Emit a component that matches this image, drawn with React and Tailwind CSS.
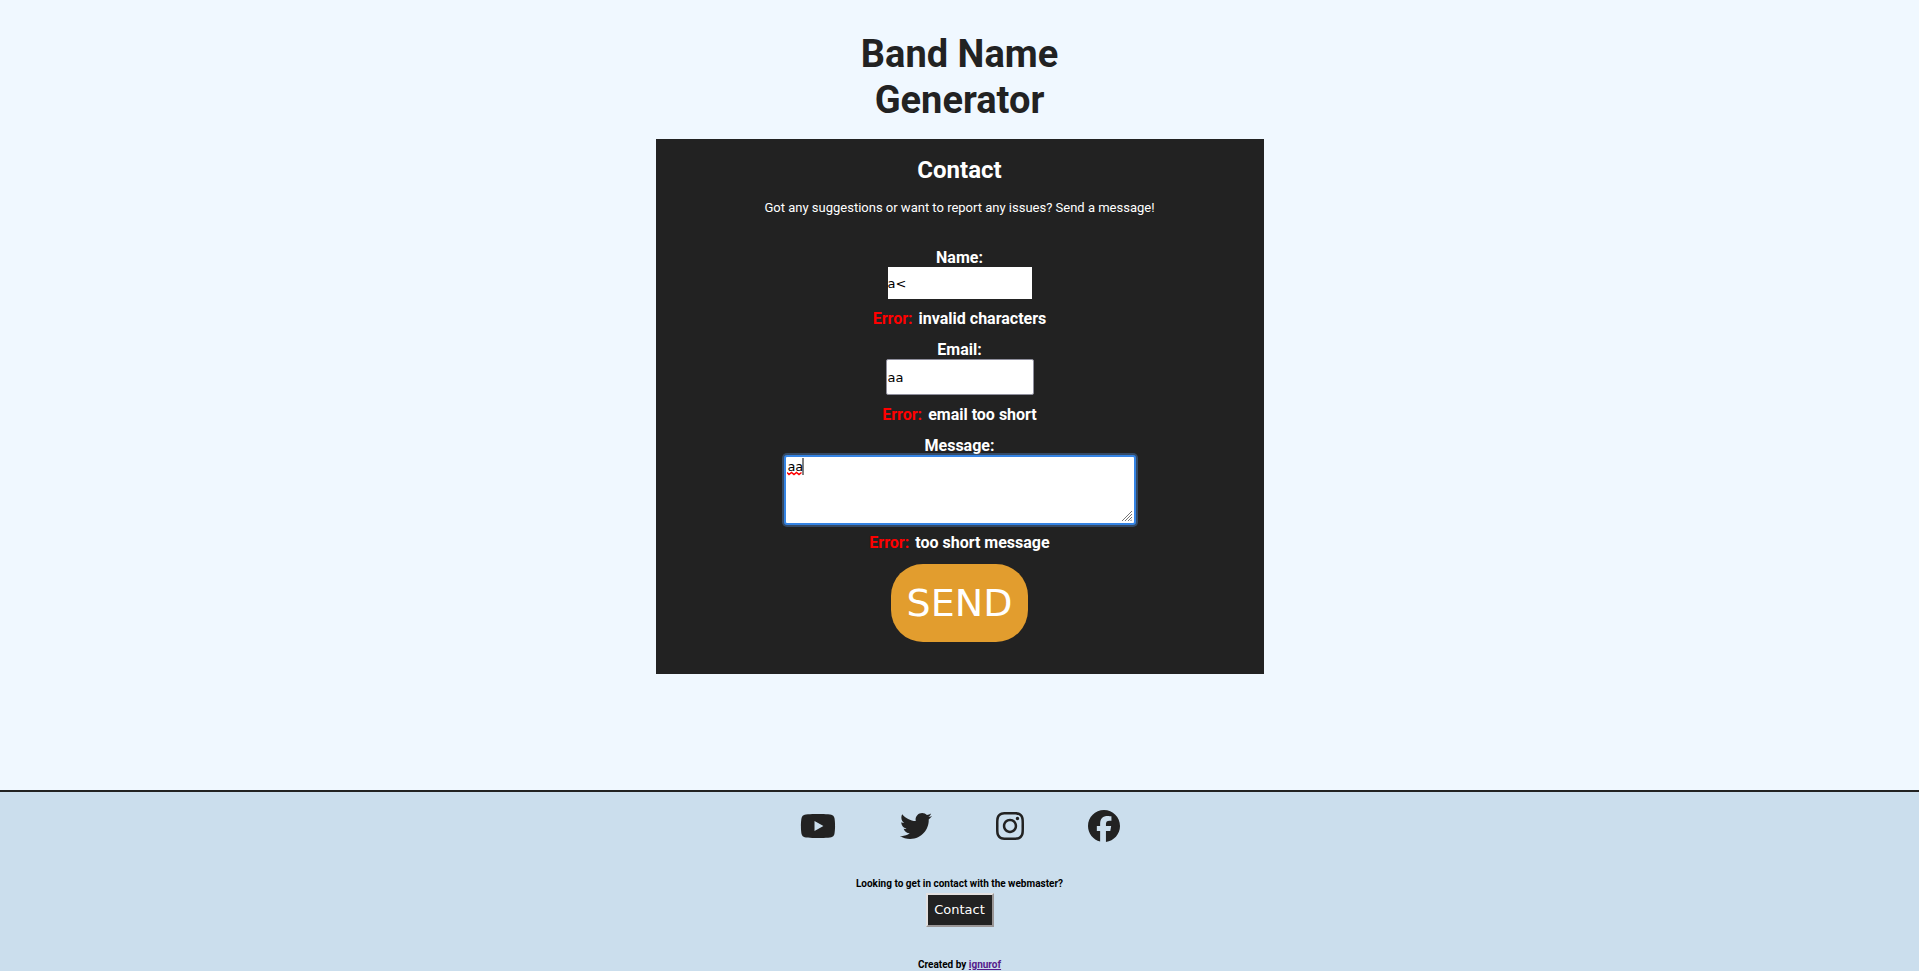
import React, { useState } from "react";
import { FaYoutube, FaTwitter, FaInstagram, FaFacebook } from "react-icons/fa6";

function FieldError({ children, className }) {
  return (
    <p className={`flex justify-center gap-1.5 font-bold leading-5 ${className}`}>
      <span className="text-[#ff0000]">Error:</span>
      <span>{children}</span>
    </p>
  );
}

const links = [
  { name: "YouTube", Icon: FaYoutube, width: "w-9" },
  { name: "Twitter", Icon: FaTwitter, width: "w-8" },
  { name: "Instagram", Icon: FaInstagram, width: "w-7" },
  { name: "Facebook", Icon: FaFacebook, width: "w-8" },
];

export default function App() {
  const [name, setName] = useState("a<");
  const [email, setEmail] = useState("aa");
  const [message, setMessage] = useState("aa");

  return (
    <div className="flex min-h-screen flex-col bg-[#f0f8ff] text-center font-['Roboto',sans-serif] text-black">
      <header className="flex justify-center pt-[31px]">
        <h1 className="w-64 text-[38px] font-bold leading-[46px] text-[#222]">Band Name Generator</h1>
      </header>

      <main className="mx-auto mb-[116px] mt-4 w-full max-w-[608px] bg-[#222] pb-8 text-white">
        <h2 className="pt-[17px] text-2xl font-bold leading-7">Contact</h2>
        <p className="mt-4 text-[13px] leading-4">
          Got any suggestions or want to report any issues? Send a message!
        </p>
        <form className="mt-[33px] flex flex-col items-center" onSubmit={(e) => e.preventDefault()}>
          <label htmlFor="name" className="font-bold leading-[18px]">Name:</label>
          <input
            id="name"
            type="text"
            value={name}
            onChange={(e) => setName(e.target.value)}
            className="h-8 w-36 bg-white font-['DejaVu_Sans',sans-serif] text-[13px] text-black outline-none"
          />
          <FieldError className="mt-[10px]">invalid characters</FieldError>
          <label htmlFor="email" className="mt-3 font-bold leading-[18px]">Email:</label>
          <input
            id="email"
            type="text"
            value={email}
            onChange={(e) => setEmail(e.target.value)}
            className="h-9 w-[148px] rounded-[2px] border border-[#8f8f9d] bg-white px-px font-['DejaVu_Sans',sans-serif] text-[13px] text-black outline-none"
          />
          <FieldError className="mt-[10px]">email too short</FieldError>
          <label htmlFor="message" className="relative z-10 mt-3 font-bold leading-[18px]">Message:</label>
          <div className="relative flex">
            <textarea
              id="message"
              spellCheck={false}
              value={message}
              onChange={(e) => setMessage(e.target.value)}
              className="h-[70px] w-[352px] resize-none rounded-[3px] border-2 border-[#3584e4] bg-white px-[2px] py-[2px] font-['DejaVu_Sans_Mono',monospace] text-[13px] leading-4 text-black shadow-[0_0_0_2px_#344a66] outline-none"
            />
            {/* spelling mark and caret */}
            <svg className="pointer-events-none absolute left-[3px] top-[3px]" width="17" height="18" viewBox="0 0 17 18" fill="none" aria-hidden="true">
              <path d="M0 14.5l2 2 2.5-2 2.5 2 2.5-2 2.5 2 2.5-2" stroke="#f00" strokeWidth="1.5" />
              <path d="M16 0v17" stroke="#000" />
            </svg>
            {/* resize grip */}
            <svg className="pointer-events-none absolute bottom-1 right-1" width="10" height="10" viewBox="0 0 10 10" stroke="#777" aria-hidden="true">
              <path d="M0 10L10 0M3 10l7-7M6 10l4-4M8.500 10l1.500-1.500" />
            </svg>
          </div>
          <FieldError className="mt-[8px]">too short message</FieldError>
          <button
            type="submit"
            className="mt-[11px] rounded-[32px] bg-[#e29d2e] px-4 py-4 font-['DejaVu_Sans',sans-serif] text-[38px] leading-[46px] text-white"
          >
            SEND
          </button>
        </form>
      </main>

      <footer className="flex flex-1 flex-col items-center border-t-2 border-[#222] bg-[#cbdeed]">
        <nav className="mt-[18px] flex gap-16">
          {links.map(({ name, Icon, width }) => (
            <a key={name} href="#" aria-label={name} className={`text-[#222] ${width}`}>
              <Icon className="h-8 w-full" />
            </a>
          ))}
        </nav>
        <p className="mt-9 text-[10px] font-bold leading-3">Looking to get in contact with the webmaster?</p>
        <button
          type="button"
          className="mt-[3px] h-[34px] w-[68px] border-2 border-b-[#9a9696] border-l-[#e3e1e1] border-r-[#9a9696] border-t-[#e3e1e1] bg-[#222] font-['DejaVu_Sans',sans-serif] text-[13px] text-white"
        >
          Contact
        </button>
        <p className="mt-8 text-[10px] font-bold leading-3">
          Created by <a href="#" className="text-[#551a8b] underline">ignurof</a>
        </p>
      </footer>
    </div>
  );
}
